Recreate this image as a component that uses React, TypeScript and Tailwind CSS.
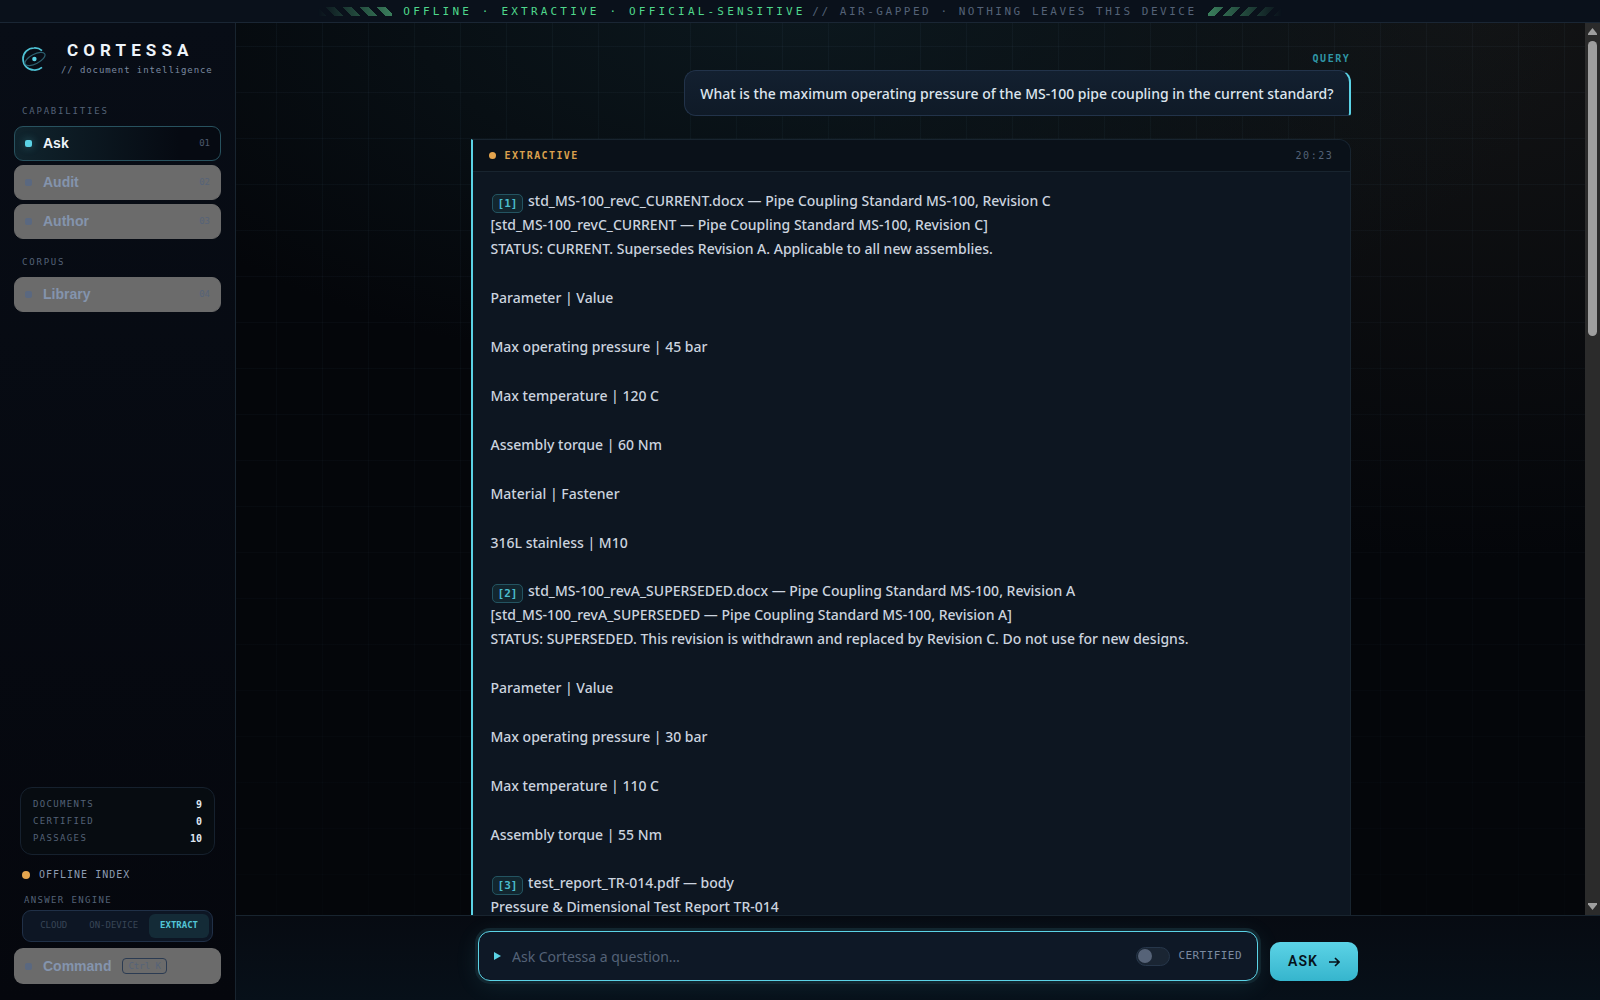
import { useState } from 'react';
import clsx from 'clsx';

const capabilities = [
  { name: 'Ask', num: '01' },
  { name: 'Audit', num: '02' },
  { name: 'Author', num: '03' },
];

const corpus = [{ name: 'Library', num: '04' }];

const stats = [
  { label: 'Documents', value: 9 },
  { label: 'Certified', value: 0 },
  { label: 'Passages', value: 10 },
];

const engines = ['Cloud', 'On-device', 'Extract'];

type Passage = { cite: number; lines: string[]; rows: string[] };

const passages: Passage[] = [
  {
    cite: 1,
    lines: [
      'std_MS-100_revC_CURRENT.docx — Pipe Coupling Standard MS-100, Revision C',
      '[std_MS-100_revC_CURRENT — Pipe Coupling Standard MS-100, Revision C]',
      'STATUS: CURRENT. Supersedes Revision A. Applicable to all new assemblies.',
    ],
    rows: [
      'Parameter | Value',
      'Max operating pressure | 45 bar',
      'Max temperature | 120 C',
      'Assembly torque | 60 Nm',
      'Material | Fastener',
      '316L stainless | M10',
    ],
  },
  {
    cite: 2,
    lines: [
      'std_MS-100_revA_SUPERSEDED.docx — Pipe Coupling Standard MS-100, Revision A',
      '[std_MS-100_revA_SUPERSEDED — Pipe Coupling Standard MS-100, Revision A]',
      'STATUS: SUPERSEDED. This revision is withdrawn and replaced by Revision C. Do not use for new designs.',
    ],
    rows: [
      'Parameter | Value',
      'Max operating pressure | 30 bar',
      'Max temperature | 110 C',
      'Assembly torque | 55 Nm',
    ],
  },
  {
    cite: 3,
    lines: ['test_report_TR-014.pdf — body', 'Pressure & Dimensional Test Report TR-014'],
    rows: [],
  },
];

function Banner() {
  return (
    <header className="relative flex h-[23px] shrink-0 items-center justify-center gap-[11px] border-b border-[#1a2634] bg-[#0a111b] text-[11px] whitespace-nowrap uppercase">
      <div className="h-[9px] w-[74px] shrink-0 bg-[repeating-linear-gradient(45deg,#3f8a63_0_6px,transparent_6px_12px)] mask-[linear-gradient(to_right,transparent,black)] opacity-90" />
      <p className="pt-[2px]">
        <span className="tracking-[0.29em] text-[#4fd88c]">Offline · Extractive · Official-Sensitive</span>{' '}
        <span className="tracking-[0.23em] text-[#546277]">// Air-gapped · Nothing leaves this device</span>
      </p>
      <div className="h-[9px] w-[74px] shrink-0 bg-[repeating-linear-gradient(-45deg,#3f8a63_0_6px,transparent_6px_12px)] mask-[linear-gradient(to_left,transparent,black)] opacity-90" />
    </header>
  );
}

function Logo() {
  return (
    <svg viewBox="0 0 24 24" className="size-6 shrink-0" fill="none">
      <path d="M20 3.6A11 11 0 0 0 12 1C5.9 1 1 5.9 1 12s4.9 11 11 11a11 11 0 0 0 8-2.6" stroke="#4fc3d6" strokeWidth="1.7" />
      <ellipse cx="13" cy="12" rx="11" ry="4.8" transform="rotate(-27 13 12)" stroke="#2c5f6e" strokeWidth="1.2" />
      <circle cx="12.4" cy="12" r="2.2" fill="#5bd3e6" />
    </svg>
  );
}

function NavButton({ name, num, active, onClick }: { name: string; num: string; active: boolean; onClick: () => void }) {
  return (
    <button
      type="button"
      onClick={onClick}
      className={clsx(
        'flex h-[35px] w-full items-center gap-[11px] rounded-[9px] border px-[10px] text-left',
        active
          ? 'border-[#28525f] bg-linear-to-r from-[#10242d] to-[#060a12] to-80% text-[#eef4fa]'
          : 'border-[#6b6b6b] bg-[#6b6b6b] text-[#8494ad]',
      )}
    >
      <span className={clsx('size-[7px] rounded-[2px]', active ? 'bg-[#5bd3e6] shadow-[0_0_8px_#5bd3e666]' : 'bg-[#5a6880]')} />
      <span className="flex-1 font-['Liberation_Sans',sans-serif] text-[14px] font-bold">{name}</span>
      <span className={clsx('text-[9px]', active ? 'text-[#4c596c]' : 'text-[#566378]')}>{num}</span>
    </button>
  );
}

function Sidebar() {
  const [view, setView] = useState('Ask');
  const [engine, setEngine] = useState('Extract');

  return (
    <aside className="flex w-[236px] shrink-0 flex-col border-r border-[#18242f] bg-linear-to-b from-[#080d16] to-[#05070d] px-[14px] pb-4">
      <div className="flex items-center pt-[17px] pl-2">
        <Logo />
        <div className="pl-[15px]">
          <h1 className="pl-[6px] font-[Roboto,sans-serif] text-[17px] leading-5 font-bold tracking-[0.3em] text-[#eef4fa]">CORTESSA</h1>
          <p className="mt-[2px] text-[9px] leading-4 tracking-[0.1em] whitespace-nowrap text-[#7b8aa0]">// document intelligence</p>
        </div>
      </div>

      <nav className="pt-[25px]">
        <h2 className="pl-2 text-[9px] leading-4 tracking-[0.2em] text-[#546277] uppercase">Capabilities</h2>
        <div className="mt-[7px] flex flex-col gap-1">
          {capabilities.map(item => (
            <NavButton key={item.name} {...item} active={view === item.name} onClick={() => setView(item.name)} />
          ))}
        </div>
        <h2 className="mt-[15px] pl-2 text-[9px] leading-4 tracking-[0.2em] text-[#546277] uppercase">Corpus</h2>
        <div className="mt-[7px]">
          {corpus.map(item => (
            <NavButton key={item.name} {...item} active={view === item.name} onClick={() => setView(item.name)} />
          ))}
        </div>
      </nav>

      <div className="mt-auto">
        <dl className="mx-[6px] rounded-xl border border-[#16212e] bg-[#070c11] px-3 pt-2 pb-[7px]">
          {stats.map(s => (
            <div key={s.label} className="flex h-[17px] items-center justify-between text-[9px]">
              <dt className="tracking-[0.15em] text-[#546277] uppercase">{s.label}</dt>
              <dd className="text-[10px] font-bold text-[#dfe7f0]">{s.value}</dd>
            </div>
          ))}
        </dl>

        <div className="mt-3 flex items-center gap-[9px] pl-2 text-[10px] leading-4 tracking-[0.1em] text-[#8c9bb1] uppercase">
          <span className="size-2 rounded-full bg-[#e5a54e]" />
          Offline index
        </div>

        <p className="mt-[9px] pl-[10px] text-[9px] leading-4 tracking-[0.15em] text-[#546277] uppercase">Answer engine</p>
        <div className="mx-2 mt-[2px] flex h-8 items-center justify-end rounded-[9px] border border-[#203047] bg-[#0d1624] p-[3px]">
          {engines.map(e => (
            <button
              key={e}
              type="button"
              onClick={() => setEngine(e)}
              className={clsx(
                'h-6 rounded-md px-[11px] text-[9px] whitespace-nowrap uppercase',
                engine === e ? 'bg-[#142b37] font-bold text-[#52c6d8]' : 'text-[#384556]',
              )}
            >
              {e}
            </button>
          ))}
        </div>

        <button
          type="button"
          className="mt-[6px] flex h-9 w-full items-center gap-[11px] rounded-[9px] bg-[#6b6b6b] px-[11px] text-[#8494ad]"
        >
          <span className="size-[7px] rounded-[2px] bg-[#5a6880]" />
          <span className="font-['Liberation_Sans',sans-serif] text-[14px] font-bold">Command</span>
          <kbd className="rounded border border-[#2b3b52] px-[5px] font-['DejaVu_Sans_Mono',monospace] text-[9px] leading-[14px] text-[#566378]">Ctrl K</kbd>
        </button>
      </div>
    </aside>
  );
}

function Cite({ n }: { n: number }) {
  return (
    <a
      href={`#source-${n}`}
      className="mx-px rounded-[5px] border border-[#235461] bg-[#12262f] px-[5px] py-[2px] align-[-1px] font-['DejaVu_Sans_Mono',monospace] text-[11px] leading-none font-bold text-[#4bbccd]"
    >
      [{n}]
    </a>
  );
}

function Answer() {
  return (
    <article className="mt-[23px] rounded-tr-xl border border-l-2 border-[#18242f] border-l-[#5bd3e6] bg-[#0d1621]">
      <div className="flex h-8 items-center justify-between rounded-tr-xl border-b border-[#18242f] bg-[#0a1119] px-4 text-[10px]">
        <span className="flex items-center gap-[9px] font-bold tracking-[0.14em] text-[#dba04e] uppercase">
          <span className="size-[7px] rounded-full bg-[#e5a54e]" />
          Extractive
        </span>
        <time className="tracking-[0.16em] text-[#546277]">20:23</time>
      </div>
      <div className="flex flex-col gap-6 px-[18px] py-[17px] font-['Noto_Sans',sans-serif] text-[14px] leading-6 font-medium text-[#cbd3df]">
        {passages.map(p => (
          <section key={p.cite} className="flex flex-col gap-[25px]">
            <p>
              <Cite n={p.cite} />{' '}
              {p.lines.map((line, i) => (
                <span key={i}>
                  {i > 0 && <br />}
                  {line}
                </span>
              ))}
            </p>
            {p.rows.map(row => (
              <p key={row}>{row}</p>
            ))}
          </section>
        ))}
      </div>
    </article>
  );
}

function Scrollbar() {
  return (
    <div className="flex w-[15px] shrink-0 flex-col items-center bg-[#2b2b2b] py-[5px]">
      <svg viewBox="0 0 9 7" className="h-[7px] w-[9px] shrink-0" fill="#9f9f9f">
        <path d="M4.5 0 9 5.5V7H0V5.5Z" />
      </svg>
      <div className="my-[6px] flex-1">
        <div className="h-[295px] w-[9px] rounded-full bg-[#9f9f9f]" />
      </div>
      <svg viewBox="0 0 9 7" className="h-[7px] w-[9px] shrink-0" fill="#9f9f9f">
        <path d="M4.5 7 9 1.5V0H0V1.5Z" />
      </svg>
    </div>
  );
}

function Composer() {
  const [question, setQuestion] = useState('');
  const [certified, setCertified] = useState(false);

  return (
    <footer className="shrink-0 border-t border-[#18242f] bg-linear-to-b from-[#070b12] to-[#071019] pt-[15px] pb-[19px]">
      <form onSubmit={e => e.preventDefault()} className="mx-auto flex max-w-[880px] items-end gap-3">
        <div className="flex h-[50px] flex-1 items-center rounded-xl border border-[#5bd3e6] bg-[#0e1826] px-[15px] shadow-[0_0_0_3px_#12262f,0_4px_24px_#5bd3e61c]">
          <svg viewBox="0 0 7 8" className="mr-[11px] h-2 w-[7px] shrink-0" fill="#5bd3e6">
            <path d="M0 0 7 4 0 8Z" />
          </svg>
          <input
            type="text"
            aria-label="Question"
            value={question}
            onChange={e => setQuestion(e.target.value)}
            placeholder="Ask Cortessa a question…"
            className="min-w-0 flex-1 bg-transparent font-['Noto_Sans',sans-serif] text-[14px] text-[#d3dbe6] outline-none placeholder:text-[#546277]"
          />
          <label className="flex items-center gap-2 text-[11px] tracking-[0.04em] text-[#7b8aa0] uppercase">
            <input
              type="checkbox"
              checked={certified}
              onChange={e => setCertified(e.target.checked)}
              className="flex h-[19px] w-[34px] appearance-none items-center rounded-full border border-[#26364a] bg-[#1a2533] px-px before:size-[14px] before:rounded-full before:bg-[#566378] checked:justify-end checked:before:bg-[#5bd3e6]"
            />
            Certified
          </label>
        </div>
        <button
          type="submit"
          className="flex h-[39px] w-[88px] items-center justify-center gap-[11px] rounded-[10px] bg-linear-to-b from-[#5bd3e6] to-[#35b5cd] font-[Roboto,sans-serif] text-[14px] font-semibold tracking-[0.08em] text-[#06121a]"
        >
          ASK
          <svg viewBox="0 0 11 10" className="h-[10px] w-[11px]" fill="none" stroke="#06121a" strokeWidth="1.6">
            <path d="M0 5H10M6 1 10 5 6 9" />
          </svg>
        </button>
      </form>
    </footer>
  );
}

export default function App() {
  return (
    <div className="relative flex h-screen flex-col overflow-hidden bg-[#04060a] font-['DejaVu_Sans_Mono',monospace]">
      {/* ambient glow and blueprint grid */}
      <div className="pointer-events-none absolute inset-0 bg-[radial-gradient(780px_380px_at_50%_0,#0c181e,transparent),radial-gradient(760px_560px_at_92%_0,#131415,transparent)]" />
      <div className="pointer-events-none absolute inset-0 bg-[linear-gradient(#6f9fc00e_1px,transparent_1px),linear-gradient(90deg,#6f9fc00e_1px,transparent_1px)] mask-[linear-gradient(to_bottom,black,#00000040)] bg-size-[46px_46px]" />

      <Banner />
      <div className="relative flex min-h-0 flex-1">
        <Sidebar />
        <main className="flex min-w-0 flex-1 flex-col">
          <div className="flex min-h-0 flex-1">
            <div className="min-w-0 flex-1 overflow-hidden">
              <div className="mx-auto max-w-[880px] pt-[29px]">
                <div className="flex flex-col items-end">
                  <span className="text-[10px] leading-[14px] font-bold tracking-[0.16em] text-[#2f96a6] uppercase">Query</span>
                  <div className="mt-1 rounded-xl rounded-br-[3px] border border-r-2 border-[#22334a] border-r-[#5bd3e6] bg-linear-to-b from-[#132030] to-[#0f1a27] px-[15px] pt-[11px] pb-[9px] font-['Noto_Sans',sans-serif] text-[14px] leading-6 font-medium text-[#dde5ee]">
                    What is the maximum operating pressure of the MS-100 pipe coupling in the current standard?
                  </div>
                </div>
                <Answer />
              </div>
            </div>
            <Scrollbar />
          </div>
          <Composer />
        </main>
      </div>
    </div>
  );
}
